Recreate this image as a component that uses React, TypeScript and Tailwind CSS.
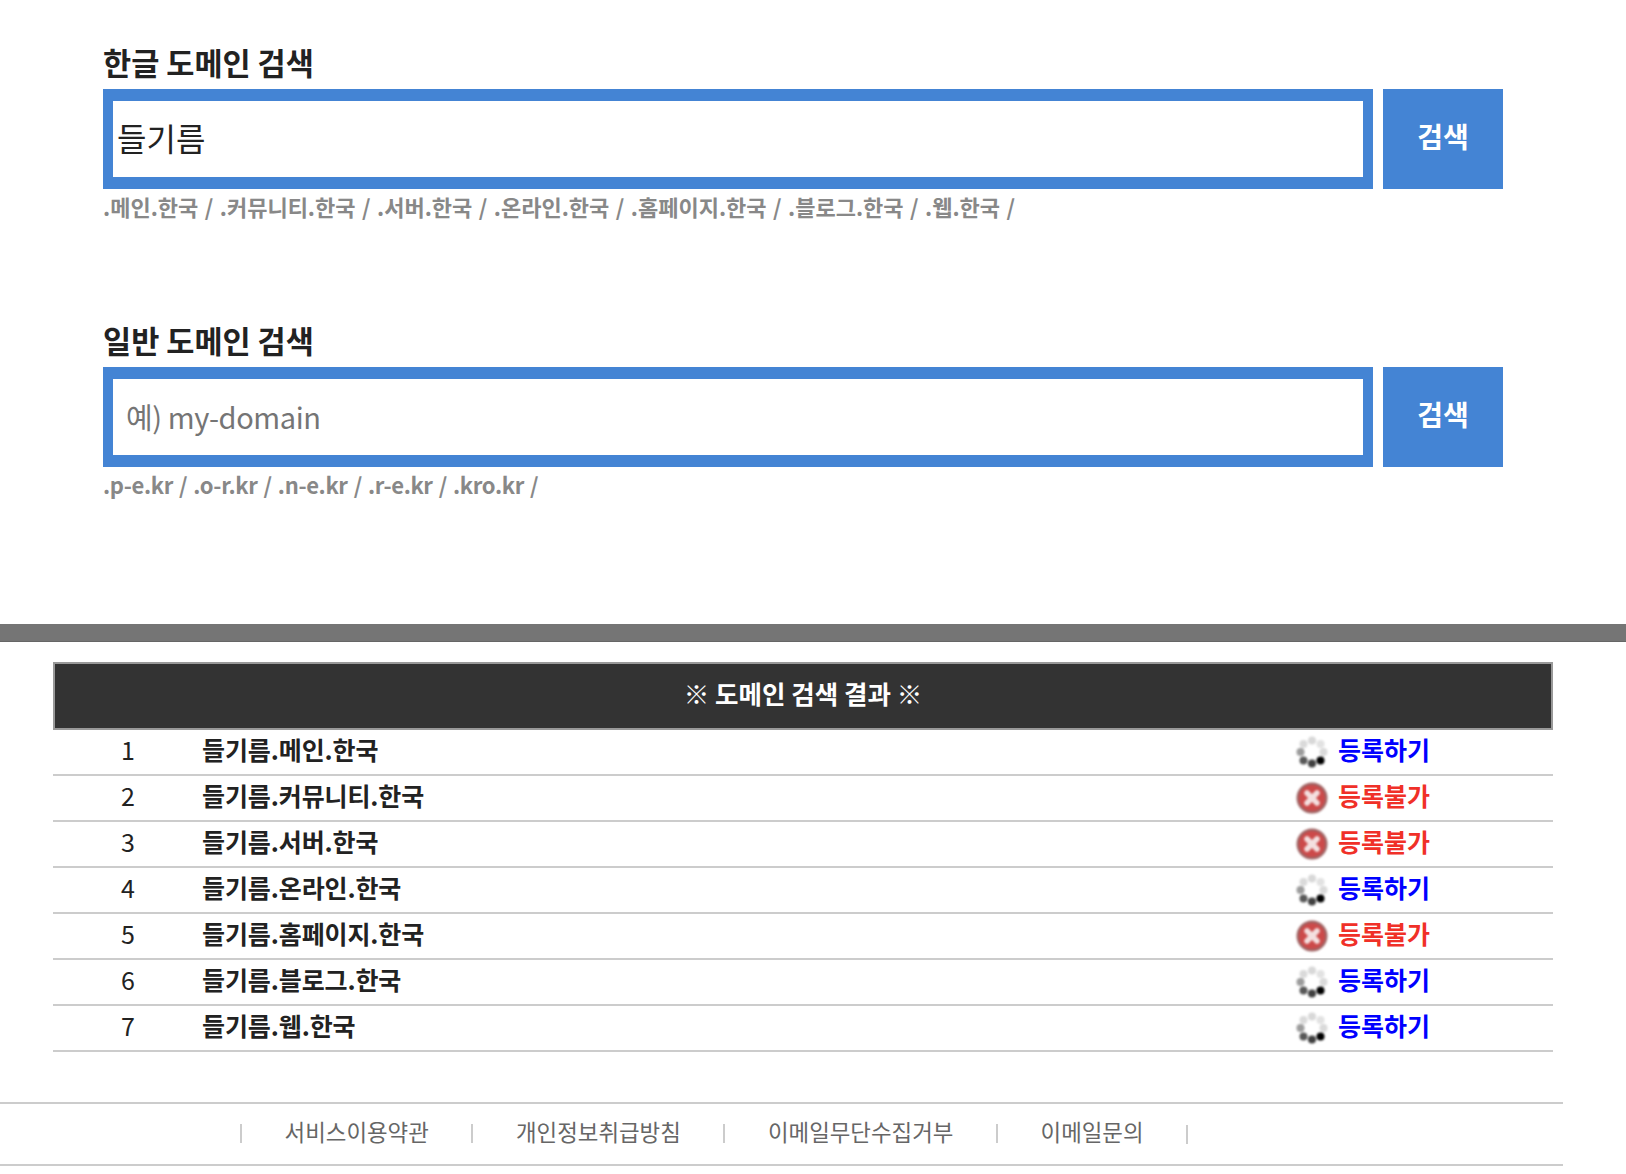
const font = { fontFamily: '"Noto Sans CJK KR", "Noto Sans", sans-serif' };

const rows: [number, string, boolean][] = [
  [1, "들기름.메인.한국", true],
  [2, "들기름.커뮤니티.한국", false],
  [3, "들기름.서버.한국", false],
  [4, "들기름.온라인.한국", true],
  [5, "들기름.홈페이지.한국", false],
  [6, "들기름.블로그.한국", true],
  [7, "들기름.웹.한국", true],
];

function Spinner() {
  const dots = [
    [16, 4.5, "#d8d8d8"],
    [24.5, 8, "#e2e2e2"],
    [27.5, 16, "#dadada"],
    [24.5, 24.5, "#000000"],
    [16, 27.5, "#404040"],
    [7.5, 24.5, "#585858"],
    [4.5, 16, "#9c9c9c"],
    [7.5, 8, "#dadada"],
  ] as const;
  return (
    <svg width="32" height="32" viewBox="0 0 32 32" className="shrink-0 blur-[0.8px]">
      {dots.map(([x, y, c], i) => (
        <circle key={i} cx={x} cy={y} r="4" fill={c} />
      ))}
    </svg>
  );
}

function ErrorIcon() {
  return (
    <svg width="32" height="32" viewBox="0 0 32 32" className="shrink-0 blur-[0.8px]">
      <circle cx="16" cy="16" r="15.5" fill="#a06464" />
      <circle cx="16" cy="16" r="13" fill="#cc4a4a" />
      <path d="M11 11 L21 21 M21 11 L11 21" stroke="#f4e0e0" strokeWidth="5.5" strokeLinecap="round" />
    </svg>
  );
}

function SearchBox({
  title,
  value,
  placeholder,
  hint,
  hintClass,
}: {
  title: string;
  value?: string;
  placeholder?: string;
  hint: string;
  hintClass: string;
}) {
  return (
    <section className="h-[278px]">
      <h2 className="text-[30.6px] leading-[38px] h-[46px] font-bold text-[#222222]">{title}</h2>
      <div className="flex gap-[10px]">
        <div className="w-[1270px] h-[100px] border-x-[10px] border-y-[12px] border-[#4484d4] bg-white flex items-center">
          <input
            readOnly
            defaultValue={value}
            placeholder={placeholder}
            className={`w-full outline-none bg-transparent text-[#222222] placeholder:text-[#757575] ${
              value ? "text-[32px] pl-[4px] pb-[4px]" : "text-[29px] pl-[13px] tracking-[-0.4px]"
            }`}
          />
        </div>
        <button className="w-[120px] h-[100px] bg-[#4484d4] text-white text-[28px] font-bold pb-[6px]">검색</button>
      </div>
      <p className={`text-[22px] leading-[34px] font-bold text-[#888888] ${hintClass}`}>{hint}</p>
    </section>
  );
}

export default function App() {
  return (
    <div style={font} className="w-[1626px] h-[1174px] overflow-hidden bg-white">
      <div className="px-[103px] pt-[43px] h-[624px]">
        <SearchBox
          title="한글 도메인 검색"
          value="들기름"
          hint=".메인.한국 / .커뮤니티.한국 / .서버.한국 / .온라인.한국 / .홈페이지.한국 / .블로그.한국 / .웹.한국 /"
          hintClass="[word-spacing:1.5px]"
        />
        <SearchBox
          title="일반 도메인 검색"
          placeholder="예) my-domain"
          hint=".p-e.kr / .o-r.kr / .n-e.kr / .r-e.kr / .kro.kr /"
          hintClass="[word-spacing:1.5px] tracking-[-0.35px]"
        />
      </div>
      <div className="h-[18px] bg-[#757575] border-b border-[#666666]" />
      <div className="mx-[53px] mt-[20px] w-[1500px]">
        <div className="h-[68px] bg-[#333333] border-2 border-[#999999] flex items-center justify-center text-white text-[25.5px] font-bold">
          <span className="mb-[5px]">※ 도메인 검색 결과 ※</span>
        </div>
        {rows.map(([n, name, ok]) => (
          <div key={n} className="h-[46px] border-b-2 border-[#cccccc] flex items-center text-[25px] text-[#222222]">
            <span className="w-[149px] pl-[1px] text-center mb-[5px]">{n}</span>
            <span className="flex-1 font-bold tracking-[-0.1px] mb-[5px]">{name}</span>
            <span className="w-[257px] flex items-center gap-[10px] font-bold">
              {ok ? <Spinner /> : <ErrorIcon />}
              <span className={`mb-[5px] ${ok ? "text-[#0000ff]" : "text-[#f03028]"}`}>{ok ? "등록하기" : "등록불가"}</span>
            </span>
          </div>
        ))}
      </div>
      <footer className="mt-[50px] w-[1563px] h-[64px] border-y-2 border-[#cccccc] flex items-center pl-[240px] text-[22.4px] text-[#666666]">
        {["서비스이용약관", "개인정보취급방침", "이메일무단수집거부", "이메일문의"].map((t) => (
          <span key={t} className="flex items-center">
            <span className="w-[2px] h-[19px] bg-[#cccccc]" />
            <span className="px-[42.6px] mb-[4px]">{t}</span>
          </span>
        ))}
        <span className="w-[2px] h-[19px] bg-[#cccccc]" />
      </footer>
    </div>
  );
}
